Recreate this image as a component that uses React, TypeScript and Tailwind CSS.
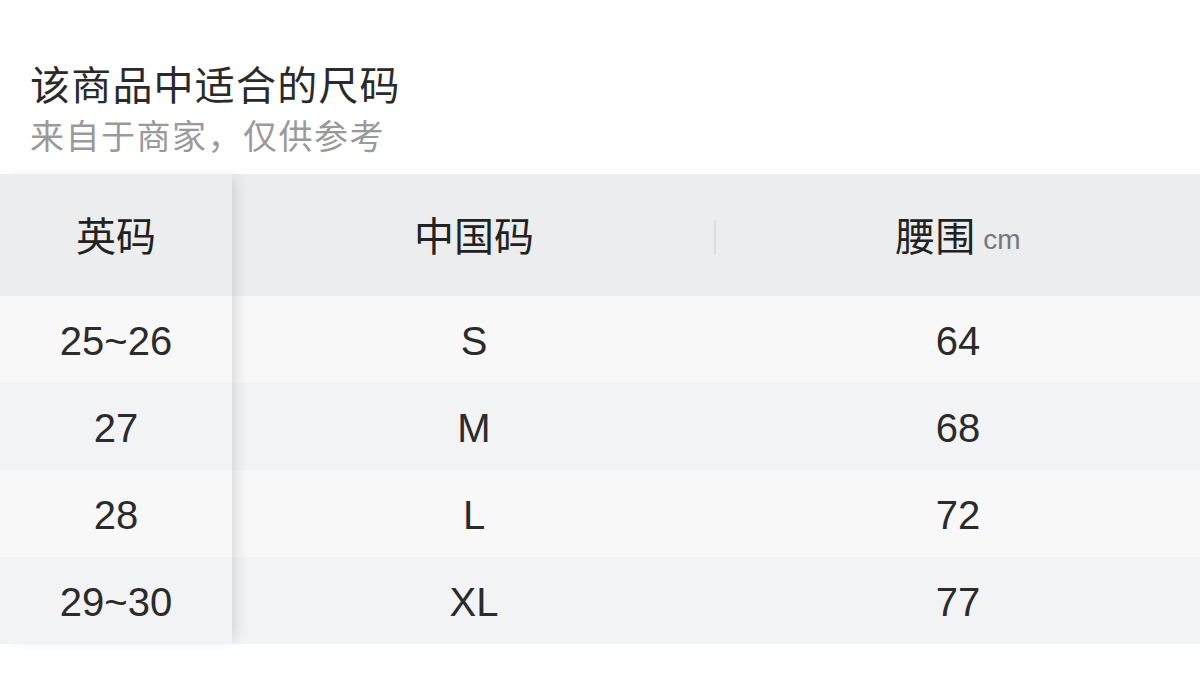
const rows = [
  { uk: '25~26', cn: 'S', waist: '64' },
  { uk: '27', cn: 'M', waist: '68' },
  { uk: '28', cn: 'L', waist: '72' },
  { uk: '29~30', cn: 'XL', waist: '77' },
];

const rowBg = ['bg-[#f8f8f8]', 'bg-[#f2f3f4]', 'bg-[#f8f8f8]', 'bg-[#f2f3f4]'];

export default function App() {
  return (
    <div
      className="w-[1200px] h-[700px] bg-white overflow-hidden text-[#222]"
      style={{ fontFamily: '"Liberation Sans", "Noto Sans CJK SC", sans-serif' }}
    >
      {/* Title */}
      <div className="pt-[61px] pl-[30px]">
        <h1 className="text-[40px] leading-[50px] tracking-[1.2px] text-[#2a2a2a] font-normal">该商品中适合的尺码</h1>
        <p className="mt-[3px] text-[34px] leading-[46px] tracking-[1.5px] text-[#9a9a9a]">来自于商家，仅供参考</p>
      </div>

      {/* Table */}
      <div className="mt-[14px] flex">
        {/* sticky first column */}
        <div className="w-[232px] relative z-10 shadow-[8px_0_12px_-4px_rgba(0,0,0,0.12)]">
          <div className="h-[122px] pt-[3px] bg-[#ecedee] flex items-center justify-center text-[40px]">英码</div>
          {rows.map((r, i) => (
            <div key={r.uk} className={`h-[87px] pt-[3px] ${rowBg[i]} flex items-center justify-center text-[40px] text-[#2b2b2b]`}>
              {r.uk}
            </div>
          ))}
        </div>

        <div className="flex-1">
          <div className="h-[122px] pt-[3px] bg-[#ecedee] grid grid-cols-2 items-center">
            <div className="relative flex items-center justify-center text-[40px]">
              中国码
              <span className="absolute right-0 top-1/2 -translate-y-1/2 w-[2px] h-[34px] bg-[#dcdddf]" />
            </div>
            <div className="flex items-center justify-center">
              <span className="text-[40px]">腰围</span>
              <span className="ml-[8px] mt-[6px] text-[28px] text-[#777]">cm</span>
            </div>
          </div>
          {rows.map((r, i) => (
            <div key={r.cn} className={`h-[87px] pt-[3px] ${rowBg[i]} grid grid-cols-2 items-center text-[40px] text-[#2b2b2b]`}>
              <div className="text-center">{r.cn}</div>
              <div className="text-center">{r.waist}</div>
            </div>
          ))}
        </div>
      </div>
    </div>
  );
}
